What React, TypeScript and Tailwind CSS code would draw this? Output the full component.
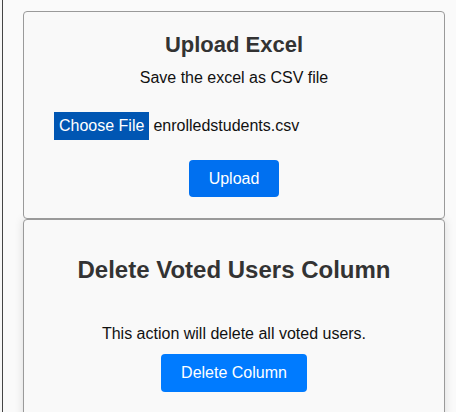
export default function App() {
    return (
        <div className="min-h-[412px] bg-[#f7f7f7] pl-[2px] font-['Liberation_Sans',Arial,sans-serif]">
            <div className="min-h-[412px] border-l border-[#444] bg-[#fafafa] pt-[11px] pl-[20px] pr-[11px]">
                {/* upload card */}
                <div className="relative z-10 rounded-[4px] border border-[#9a9a9a] bg-[#f9f9f9] px-[30px] pt-[20px] pb-[21px] text-center">
                    <h2 className="text-[22px] leading-[25px] font-bold text-[#333]">Upload Excel</h2>
                    <p className="mt-[12px] text-[16px] leading-[18px] text-[#111]">Save the excel as CSV file</p>
                    <div className="mt-[25px] flex items-center text-left">
                        <span className="flex h-[28px] items-center bg-[#0056b3] px-[5px] text-[16px] text-white">Choose File</span>
                        <span className="ml-[4px] text-[16px] text-[#111]">enrolledstudents.csv</span>
                    </div>
                    <button className="mt-[20px] h-[37px] rounded-[4px] bg-[#0070f0] px-[20px] text-[16px] text-white">Upload</button>
                </div>

                {/* delete card */}
                <div className="rounded-[4px] border border-[#9a9a9a] bg-[#f9f9f9] px-[30px] pt-[36px] pb-[30px] text-center shadow-[0_0_10px_rgba(0,0,0,0.12)]">
                    <h2 className="text-[24px] leading-[28px] font-bold text-[#333]">Delete Voted Users Column</h2>
                    <p className="mt-[41px] text-[16px] leading-[18px] text-[#111]">This action will delete all voted users.</p>
                    <button className="mt-[11px] h-[38px] rounded-[4px] bg-[#007bff] px-[20px] text-[16px] text-white">Delete Column</button>
                </div>
            </div>
        </div>
    );
}
